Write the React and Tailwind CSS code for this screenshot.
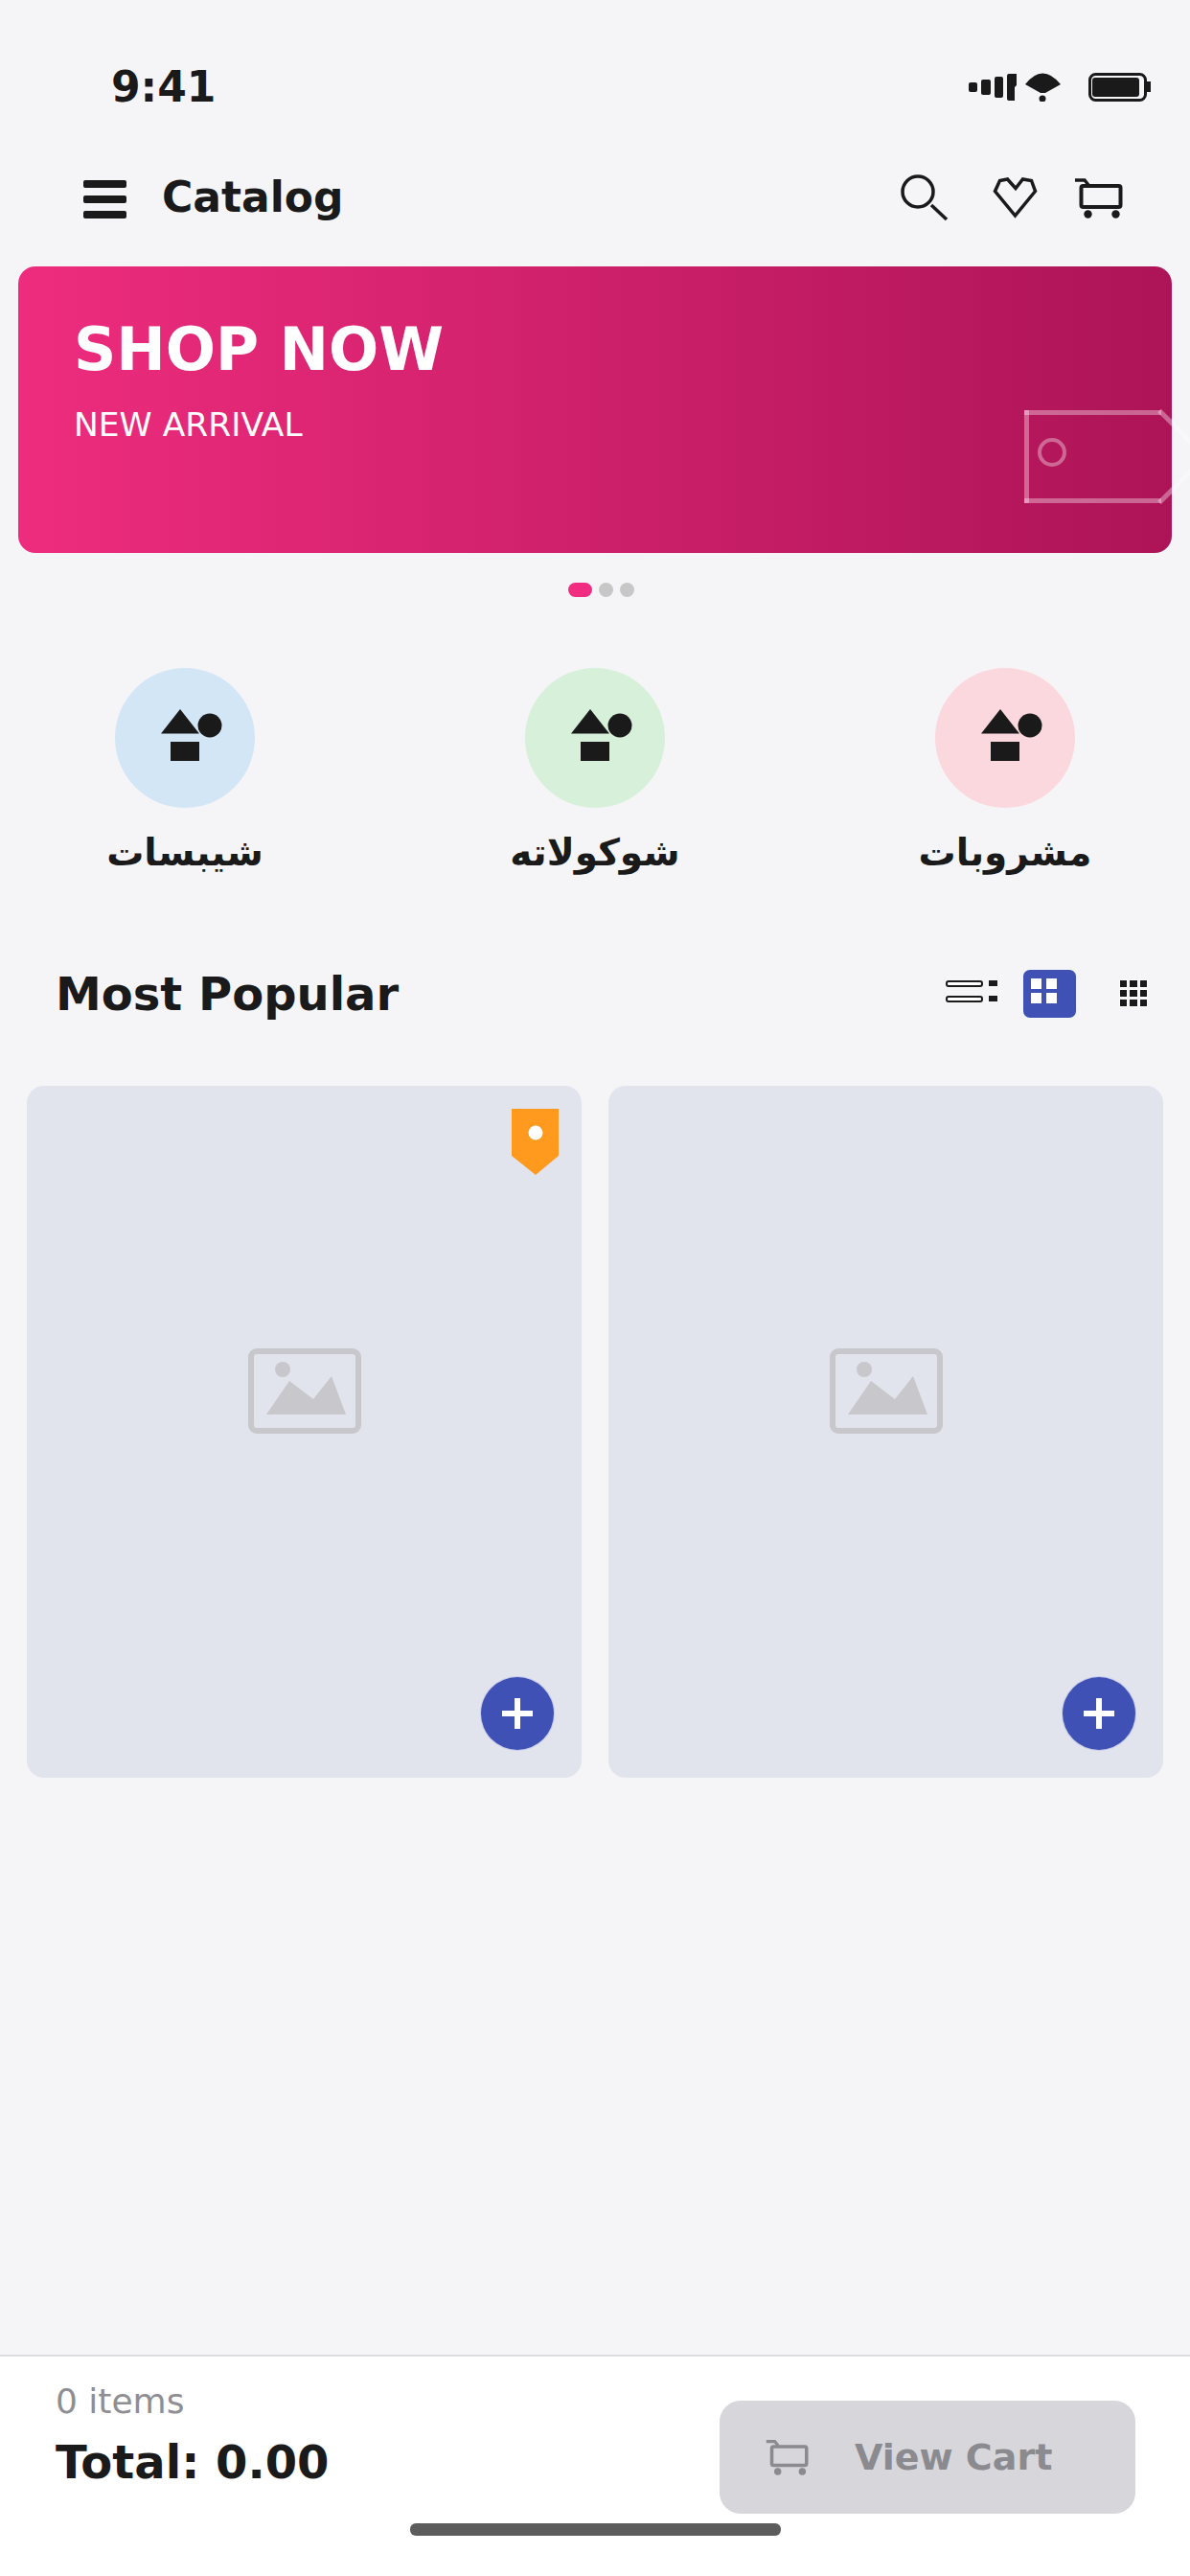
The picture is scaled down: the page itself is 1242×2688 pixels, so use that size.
import React from "react";

const CartIcon = ({ className }) => (
  <svg viewBox="1120 190 52 43" fill="none" stroke="currentColor" className={className}>
    <path d="M1122 193h10l4 5" strokeWidth="3.5" />
    <rect x="1128.5" y="199" width="41" height="22" rx="2" strokeWidth="4" />
    <circle cx="1135.5" cy="228.5" r="4.2" fill="currentColor" stroke="none" />
    <circle cx="1164.5" cy="228.5" r="4.2" fill="currentColor" stroke="none" />
  </svg>
);

const ShapesIcon = () => (
  <svg viewBox="168 740 64 54" className="w-[64px] h-[54px] text-[#1a1a1a]" fill="currentColor">
    <path d="M168 765.5L188 740L208 765.5Z" />
    <circle cx="219" cy="757" r="12.5" />
    <rect x="178" y="774" width="30" height="20" />
  </svg>
);

const Category = ({ label, circle }) => (
  <div className="w-[200px] flex flex-col items-center">
    <div className={`w-[146px] h-[146px] rounded-full flex items-center justify-center pl-[14px] pb-[6px] ${circle}`}>
      <ShapesIcon />
    </div>
    <div dir="rtl" className="mt-[20px] h-[54px] whitespace-nowrap text-[39px] leading-[54px] font-bold text-[#1a1a1a]">
      {label}
    </div>
  </div>
);

const ProductCard = ({ badge }) => (
  <div className="relative h-[722px] w-[579px] rounded-[18px] bg-[#e1e4ec] flex items-center justify-center pb-[86px]">
    {/* image placeholder */}
    <svg viewBox="260 1408 118 89" className="w-[118px] h-[89px]">
      <rect x="263" y="1411" width="112" height="83" rx="6" fill="none" stroke="#c7c7cc" strokeWidth="6" />
      <circle cx="296" cy="1430" r="8" fill="#c7c7cc" />
      <path d="M279 1477L303 1442L328 1461L347 1437L362 1477Z" fill="#c7c7cc" />
    </svg>
    {badge && (
      <svg viewBox="534 1158 49 69" className="absolute top-[24px] right-[24px] w-[49px] h-[69px]">
        <path d="M534 1158H583V1207L559 1227L534 1207Z" fill="#ff9a1f" />
        <circle cx="559" cy="1183" r="7.5" fill="#fff" />
      </svg>
    )}
    <button className="absolute right-[28px] bottom-[28px] w-[78px] h-[78px] rounded-full bg-[#3f51b5] border border-white/70 flex items-center justify-center">
      <svg viewBox="0 0 32 32" className="w-[32px] h-[32px]" fill="#fff">
        <rect x="0" y="13" width="32" height="6" />
        <rect x="13" y="0" width="6" height="32" />
      </svg>
    </button>
  </div>
);

const App = () => {
  return (
    <div className="relative w-[1242px] h-[2688px] overflow-hidden bg-[#f5f5f8] flex flex-col font-['DejaVu_Sans',sans-serif] text-[#1a1a1a]">
      {/* status bar */}
      <div className="h-[154px] pt-[66px] pl-[116px] pr-[41px] flex items-start justify-between">
        <span className="h-[50px] leading-[50px] text-[44px] font-bold">9:41</span>
        <div className="h-[50px] flex items-center">
          <svg viewBox="1011 77 96 30" className="w-[96px] h-[30px]" fill="#1a1a1a">
            <rect x="1011" y="87" width="9" height="10" rx="2" />
            <rect x="1024" y="84" width="10" height="16" rx="2" />
            <rect x="1038" y="81" width="9" height="22" rx="2" />
            <path d="M1053 78H1061V90L1059 92V106H1053Q1051 106 1051 104V80Q1051 78 1053 78Z" />
            <path d="M1070 89Q1088 66 1107 89L1091 98H1086Z" />
            <circle cx="1088" cy="104" r="3.5" />
          </svg>
          <svg viewBox="1136 77 65 30" className="ml-[29px] w-[65px] h-[30px]" fill="#1a1a1a">
            <rect x="1137.5" y="78.5" width="58" height="27" rx="6" fill="none" stroke="#1a1a1a" strokeWidth="3" />
            <rect x="1140" y="82" width="49" height="20" rx="3" />
            <rect x="1197" y="86" width="4" height="11" />
          </svg>
        </div>
      </div>

      {/* header */}
      <div className="h-[104px] pl-[87px] pr-[70px] flex items-center justify-between">
        <div className="flex items-center gap-[37px]">
          <div className="mt-[4px] w-[45px] flex flex-col gap-[8px]">
            <div className="h-[8px] rounded-[2px] bg-[#1a1a1a]" />
            <div className="h-[8px] rounded-[2px] bg-[#1a1a1a]" />
            <div className="h-[8px] rounded-[2px] bg-[#1a1a1a]" />
          </div>
          <span className="text-[44px] font-bold">Catalog</span>
        </div>
        <div className="flex items-center">
          <svg viewBox="940 183 50 49" className="w-[50px] h-[49px]" fill="none" stroke="#1a1a1a">
            <circle cx="958" cy="201" r="16" strokeWidth="3.5" />
            <path d="M972 215L988 230" strokeWidth="3.5" />
          </svg>
          <svg viewBox="1036 183 47 44" className="ml-[46px] w-[47px] h-[44px]" fill="none" stroke="#1a1a1a">
            <path d="M1038.5 198.5L1043.5 187.5L1051.5 186L1060 195.5L1067.5 186L1076.5 187.5L1080.5 198.5L1059.5 224Z" strokeWidth="3.5" />
          </svg>
          <CartIcon className="ml-[37px] w-[52px] h-[43px] text-[#1a1a1a]" />
        </div>
      </div>

      {/* banner */}
      <div className="relative mt-[20px] ml-[19px] w-[1204px] h-[299px] shrink-0 rounded-[18px] bg-[linear-gradient(90deg,#ee2c7e,#ad1457)] pl-[58px] pt-[52px] text-white">
        <div className="text-[61.5px] leading-[70px] font-bold">SHOP NOW</div>
        <div className="mt-[22px] text-[34.5px] leading-[42px]">NEW ARRIVAL</div>
        <svg viewBox="1066 425 196 103" className="absolute left-[1047px] top-[147px] w-[196px] h-[103px]" fill="none" stroke="#fff" strokeOpacity="0.35">
          <path d="M1071.5 428V525" strokeWidth="5" />
          <path d="M1069 430.5H1212" strokeWidth="5" />
          <path d="M1069 522.5H1212" strokeWidth="5" />
          <path d="M1210 428.5L1258 476.5L1210 524.5" strokeWidth="5" />
          <circle cx="1098" cy="472" r="13" strokeWidth="4" />
        </svg>
      </div>

      {/* carousel dots */}
      <div className="mt-[31px] flex items-center justify-center gap-[7px] pl-[12px]">
        <div className="w-[25px] h-[15px] rounded-full bg-[#f02d80]" />
        <div className="w-[15px] h-[15px] rounded-full bg-[#c7c7c7]" />
        <div className="w-[15px] h-[15px] rounded-full bg-[#c7c7c7]" />
      </div>

      {/* categories */}
      <div className="mt-[74px] px-[93px] flex justify-between">
        <Category label="شيبسات" circle="bg-[#d3e6f6]" />
        <Category label="شوكولاته" circle="bg-[#d6f0da]" />
        <Category label="مشروبات" circle="bg-[#fbd7de]" />
      </div>

      {/* section title */}
      <div className="mt-[95px] pl-[58px] pr-[45px] h-[50px] flex items-center justify-between">
        <h2 className="text-[48px] font-bold">Most Popular</h2>
        <div className="flex items-center">
          <svg viewBox="987 1013 54 50" className="w-[54px] h-[50px]">
            <rect x="988" y="1025" width="37" height="5" rx="2" fill="#fff" stroke="#1a1a1a" strokeWidth="2" />
            <rect x="988" y="1041" width="37" height="5" rx="2" fill="#fff" stroke="#1a1a1a" strokeWidth="2" />
            <rect x="1032" y="1024" width="9" height="6" fill="#1a1a1a" />
            <rect x="1032" y="1040" width="9" height="6" fill="#1a1a1a" />
          </svg>
          <svg viewBox="1068 1013 55 50" className="ml-[27px] w-[55px] h-[50px]">
            <rect x="1068" y="1013" width="55" height="50" rx="7" fill="#3f51b5" />
            <rect x="1076" y="1022" width="11" height="11" fill="#fff" />
            <rect x="1092" y="1022" width="11" height="11" fill="#fff" />
            <rect x="1076" y="1037" width="11" height="11" fill="#fff" />
            <rect x="1092" y="1037" width="11" height="11" fill="#fff" />
          </svg>
          <div className="ml-[46px] w-[28px] mt-[-2px] grid grid-cols-3 gap-[3px]">
            {[...Array(9)].map((_, i) => (
              <div key={i} className="h-[7px] bg-[#1a1a1a] shadow-[0_0_0_1px_#fff]" />
            ))}
          </div>
        </div>
      </div>

      {/* products */}
      <div className="mt-[71px] px-[28px] flex gap-[28px]">
        <ProductCard badge />
        <ProductCard />
      </div>

      {/* bottom bar */}
      <div className="relative mt-auto h-[231px] shrink-0 bg-white border-t-2 border-[#dcdce2] pl-[58px] pr-[57px] pt-[46px] flex items-start justify-between">
        <div>
          <div className="text-[36px] leading-[42px] mt-[-20px] text-[#8e8e93]">0 items</div>
          <div className="mt-[14px] text-[48px] leading-[56px] font-bold">Total: 0.00</div>
        </div>
        <button className="w-[434px] h-[118px] rounded-[22px] bg-[#d6d6db] pl-[47px] flex items-center gap-[48px] text-[#8a8a8f]">
          <CartIcon className="w-[46px] h-[38px]" />
          <span className="text-[38px] font-bold">View Cart</span>
        </button>
        <div className="absolute left-[428px] bottom-[42px] w-[387px] h-[13px] rounded-[6px] bg-[#5c5c5c]" />
      </div>
    </div>
  );
};

export default App;
